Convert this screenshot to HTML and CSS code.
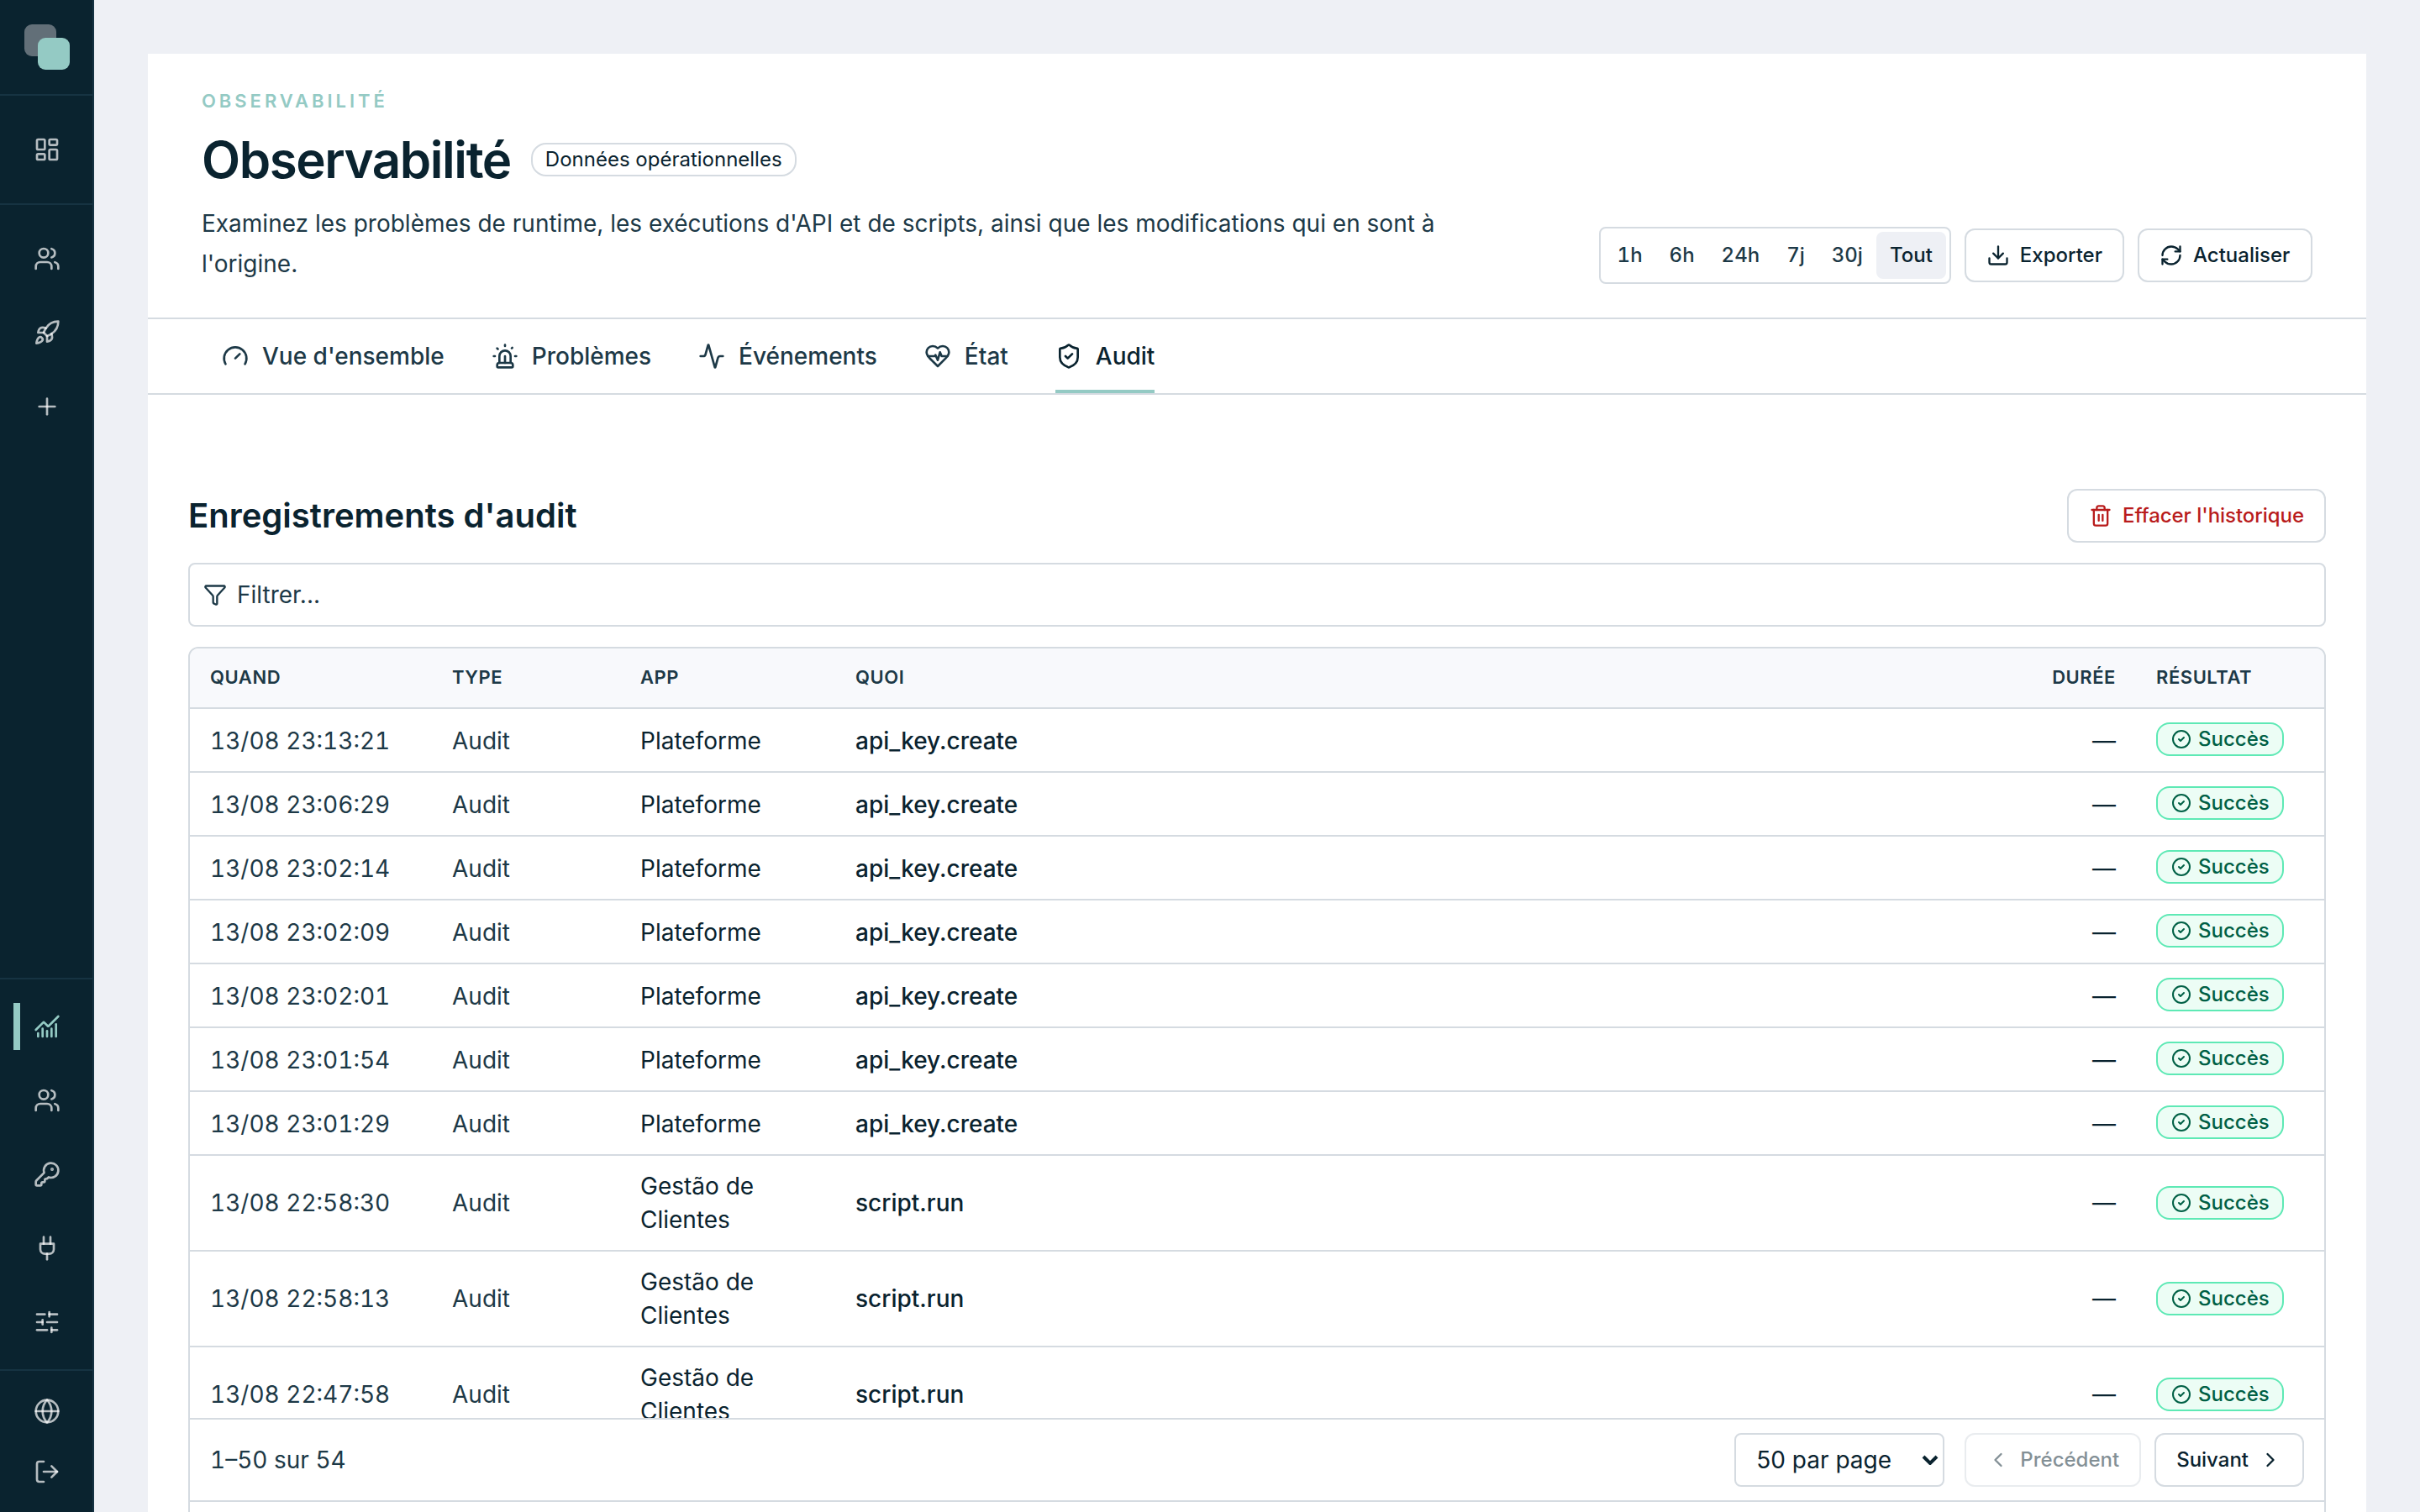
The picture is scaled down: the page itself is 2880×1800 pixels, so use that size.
FILE: index.html
```html
<!DOCTYPE html>
<html lang="fr">
<head>
    <meta charset="UTF-8">
    <meta name="viewport" content="width=device-width, initial-scale=1.0">
    <title>Observabilité</title>
    <link rel="stylesheet" href="styles.css">
</head>
<body>
    <!-- Icon sprite -->
    <svg class="sprite" aria-hidden="true">
        <symbol id="i-dashboard" viewBox="0 0 24 24"><rect width="7" height="9" x="3" y="3" rx="1"/><rect width="7" height="5" x="14" y="3" rx="1"/><rect width="7" height="9" x="14" y="12" rx="1"/><rect width="7" height="5" x="3" y="16" rx="1"/></symbol>
        <symbol id="i-users" viewBox="0 0 24 24"><path d="M16 21v-2a4 4 0 0 0-4-4H6a4 4 0 0 0-4 4v2"/><circle cx="9" cy="7" r="4"/><path d="M22 21v-2a4 4 0 0 0-3-3.87"/><path d="M16 3.13a4 4 0 0 1 0 7.75"/></symbol>
        <symbol id="i-rocket" viewBox="0 0 24 24"><path d="M4.5 16.5c-1.5 1.26-2 5-2 5s3.74-.5 5-2c.71-.84.7-2.13-.09-2.91a2.18 2.18 0 0 0-2.91-.09z"/><path d="m12 15-3-3a22 22 0 0 1 2-3.95A12.88 12.88 0 0 1 22 2c0 2.72-.78 7.5-6 11a22.35 22.35 0 0 1-4 2z"/><path d="M9 12H4s.55-3.03 2-4c1.62-1.08 5 0 5 0"/><path d="M12 15v5s3.03-.55 4-2c1.08-1.62 0-5 0-5"/></symbol>
        <symbol id="i-plus" viewBox="0 0 24 24"><path d="M5 12h14"/><path d="M12 5v14"/></symbol>
        <symbol id="i-chart" viewBox="0 0 24 24"><path d="M12 16v5"/><path d="M16 14v7"/><path d="M20 10v11"/><path d="m22 3-8.646 8.646a.5.5 0 0 1-.708 0L9.354 8.354a.5.5 0 0 0-.707 0L2 15"/><path d="M4 18v3"/><path d="M8 14v7"/></symbol>
        <symbol id="i-key" viewBox="0 0 24 24"><path d="M2.586 17.414A2 2 0 0 0 2 18.828V21a1 1 0 0 0 1 1h3a1 1 0 0 0 1-1v-1a1 1 0 0 1 1-1h1a1 1 0 0 0 1-1v-1a1 1 0 0 1 1-1h.172a2 2 0 0 0 1.414-.586l.814-.814a6.5 6.5 0 1 0-4-4z"/><circle cx="16.5" cy="7.5" r=".5" fill="currentColor"/></symbol>
        <symbol id="i-plug" viewBox="0 0 24 24"><path d="M12 22v-5"/><path d="M9 8V2"/><path d="M15 8V2"/><path d="M18 8v5a4 4 0 0 1-4 4h-4a4 4 0 0 1-4-4V8Z"/></symbol>
        <symbol id="i-sliders" viewBox="0 0 24 24"><path d="M10 5H3"/><path d="M12 19H3"/><path d="M14 3v4"/><path d="M16 17v4"/><path d="M21 12h-9"/><path d="M21 19h-5"/><path d="M21 5h-7"/><path d="M8 10v4"/><path d="M8 12H3"/></symbol>
        <symbol id="i-globe" viewBox="0 0 24 24"><circle cx="12" cy="12" r="10"/><path d="M12 2a14.5 14.5 0 0 0 0 20 14.5 14.5 0 0 0 0-20"/><path d="M2 12h20"/></symbol>
        <symbol id="i-logout" viewBox="0 0 24 24"><path d="m16 17 5-5-5-5"/><path d="M21 12H9"/><path d="M9 21H5a2 2 0 0 1-2-2V5a2 2 0 0 1 2-2h4"/></symbol>
        <symbol id="i-gauge" viewBox="0 0 24 24"><path d="m12 14 4-4"/><path d="M3.34 19a10 10 0 1 1 17.32 0"/></symbol>
        <symbol id="i-siren" viewBox="0 0 24 24"><path d="M7 18v-6a5 5 0 1 1 10 0v6"/><path d="M5 21a1 1 0 0 0 1 1h12a1 1 0 0 0 1-1v-1a2 2 0 0 0-2-2H7a2 2 0 0 0-2 2z"/><path d="M21 12h1"/><path d="M18.5 4.5 18 5"/><path d="M2 12h1"/><path d="M12 2v1"/><path d="m4.929 4.929.707.707"/><path d="M12 12v6"/></symbol>
        <symbol id="i-activity" viewBox="0 0 24 24"><path d="M22 12h-2.48a2 2 0 0 0-1.93 1.46l-2.35 8.36a.25.25 0 0 1-.48 0L9.24 2.18a.25.25 0 0 0-.48 0l-2.35 8.36A2 2 0 0 1 4.49 12H2"/></symbol>
        <symbol id="i-heart" viewBox="0 0 24 24"><path d="M19 14c1.49-1.46 3-3.21 3-5.5A5.5 5.5 0 0 0 16.5 3c-1.76 0-3 .5-4.5 2-1.5-1.5-2.74-2-4.5-2A5.5 5.5 0 0 0 2 8.5c0 2.3 1.5 4.05 3 5.5l7 7Z"/><path d="M3.22 12H9.5l.5-1 2 4.5 2-7 1.5 3.5h5.27"/></symbol>
        <symbol id="i-shield" viewBox="0 0 24 24"><path d="M20 13c0 5-3.5 7.5-7.66 8.95a1 1 0 0 1-.67-.01C7.5 20.5 4 18 4 13V6a1 1 0 0 1 1-1c2 0 4.5-1.2 6.24-2.72a1.17 1.17 0 0 1 1.52 0C14.51 3.81 17 5 19 5a1 1 0 0 1 1 1z"/><path d="m9 12 2 2 4-4"/></symbol>
        <symbol id="i-download" viewBox="0 0 24 24"><path d="M12 15V3"/><path d="M21 15v4a2 2 0 0 1-2 2H5a2 2 0 0 1-2-2v-4"/><path d="m7 10 5 5 5-5"/></symbol>
        <symbol id="i-refresh" viewBox="0 0 24 24"><path d="M3 12a9 9 0 0 1 9-9 9.75 9.75 0 0 1 6.74 2.74L21 8"/><path d="M21 3v5h-5"/><path d="M21 12a9 9 0 0 1-9 9 9.75 9.75 0 0 1-6.74-2.74L3 16"/><path d="M8 16H3v5"/></symbol>
        <symbol id="i-trash" viewBox="0 0 24 24"><path d="M10 11v6"/><path d="M14 11v6"/><path d="M19 6v14a2 2 0 0 1-2 2H7a2 2 0 0 1-2-2V6"/><path d="M3 6h18"/><path d="M8 6V4a2 2 0 0 1 2-2h4a2 2 0 0 1 2 2v2"/></symbol>
        <symbol id="i-funnel" viewBox="0 0 24 24"><path d="M10 20a1 1 0 0 0 .553.895l2 1A1 1 0 0 0 14 21v-7a2 2 0 0 1 .517-1.341L21.74 4.67A1 1 0 0 0 21 3H3a1 1 0 0 0-.742 1.67l7.225 7.989A2 2 0 0 1 10 14z"/></symbol>
        <symbol id="i-check" viewBox="0 0 24 24"><circle cx="12" cy="12" r="10"/><path d="m9 12 2 2 4-4"/></symbol>
        <symbol id="i-left" viewBox="0 0 24 24"><path d="m15 18-6-6 6-6"/></symbol>
        <symbol id="i-right" viewBox="0 0 24 24"><path d="m9 18 6-6-6-6"/></symbol>
    </svg>

    <aside class="sidebar">
        <a href="#" class="logo"><span class="logo-mark"></span></a>
        <nav class="nav nav-home">
            <a href="#" class="nav-item"><svg class="icon"><use href="#i-dashboard"/></svg></a>
        </nav>
        <nav class="nav nav-apps">
            <a href="#" class="nav-item"><svg class="icon"><use href="#i-users"/></svg></a>
            <a href="#" class="nav-item"><svg class="icon"><use href="#i-rocket"/></svg></a>
            <a href="#" class="nav-item"><svg class="icon"><use href="#i-plus"/></svg></a>
        </nav>
        <nav class="nav nav-admin">
            <a href="#" class="nav-item active"><svg class="icon"><use href="#i-chart"/></svg></a>
            <a href="#" class="nav-item"><svg class="icon"><use href="#i-users"/></svg></a>
            <a href="#" class="nav-item"><svg class="icon"><use href="#i-key"/></svg></a>
            <a href="#" class="nav-item"><svg class="icon"><use href="#i-plug"/></svg></a>
            <a href="#" class="nav-item"><svg class="icon"><use href="#i-sliders"/></svg></a>
        </nav>
        <nav class="nav nav-footer">
            <a href="#" class="nav-item"><svg class="icon"><use href="#i-globe"/></svg></a>
            <a href="#" class="nav-item"><svg class="icon"><use href="#i-logout"/></svg></a>
        </nav>
    </aside>

    <main class="main">
        <div class="panel">
            <header class="page-header">
                <div class="page-intro">
                    <div class="eyebrow">Observabilité</div>
                    <div class="title-row">
                        <h1>Observabilité</h1>
                        <span class="pill">Données opérationnelles</span>
                    </div>
                    <p class="description">Examinez les problèmes de runtime, les exécutions d'API et de scripts, ainsi que les modifications qui en sont à l'origine.</p>
                </div>
                <div class="actions">
                    <div class="range">
                        <button>1h</button>
                        <button>6h</button>
                        <button>24h</button>
                        <button>7j</button>
                        <button>30j</button>
                        <button class="selected">Tout</button>
                    </div>
                    <button class="btn"><svg class="icon"><use href="#i-download"/></svg>Exporter</button>
                    <button class="btn refresh"><svg class="icon"><use href="#i-refresh"/></svg>Actualiser</button>
                </div>
            </header>

            <nav class="tabs">
                <a href="#" class="tab"><svg class="icon"><use href="#i-gauge"/></svg>Vue d'ensemble</a>
                <a href="#" class="tab"><svg class="icon"><use href="#i-siren"/></svg>Problèmes</a>
                <a href="#" class="tab"><svg class="icon"><use href="#i-activity"/></svg>Événements</a>
                <a href="#" class="tab"><svg class="icon"><use href="#i-heart"/></svg>État</a>
                <a href="#" class="tab active"><svg class="icon"><use href="#i-shield"/></svg>Audit</a>
            </nav>

            <section class="content">
                <div class="section-header">
                    <h2>Enregistrements d'audit</h2>
                    <button class="btn danger"><svg class="icon"><use href="#i-trash"/></svg>Effacer l'historique</button>
                </div>

                <div class="filter"><svg class="icon"><use href="#i-funnel"/></svg><span>Filtrer...</span></div>

                <div class="table-card">
                    <div class="table-scroll">
                        <table>
                            <thead>
                                <tr>
                                    <th class="col-when">Quand</th>
                                    <th class="col-type">Type</th>
                                    <th class="col-app">App</th>
                                    <th>Quoi</th>
                                    <th class="col-duration">Durée</th>
                                    <th class="col-result">Résultat</th>
                                </tr>
                            </thead>
                            <tbody>
                                <tr>
                                    <td class="when">13/08 23:13:21</td>
                                    <td class="type">Audit</td>
                                    <td>Plateforme</td>
                                    <td class="what">api_key.create</td>
                                    <td class="duration">—</td>
                                    <td class="result"><span class="badge"><svg class="icon"><use href="#i-check"/></svg>Succès</span></td>
                                </tr>
                                <tr>
                                    <td class="when">13/08 23:06:29</td>
                                    <td class="type">Audit</td>
                                    <td>Plateforme</td>
                                    <td class="what">api_key.create</td>
                                    <td class="duration">—</td>
                                    <td class="result"><span class="badge"><svg class="icon"><use href="#i-check"/></svg>Succès</span></td>
                                </tr>
                                <tr>
                                    <td class="when">13/08 23:02:14</td>
                                    <td class="type">Audit</td>
                                    <td>Plateforme</td>
                                    <td class="what">api_key.create</td>
                                    <td class="duration">—</td>
                                    <td class="result"><span class="badge"><svg class="icon"><use href="#i-check"/></svg>Succès</span></td>
                                </tr>
                                <tr>
                                    <td class="when">13/08 23:02:09</td>
                                    <td class="type">Audit</td>
                                    <td>Plateforme</td>
                                    <td class="what">api_key.create</td>
                                    <td class="duration">—</td>
                                    <td class="result"><span class="badge"><svg class="icon"><use href="#i-check"/></svg>Succès</span></td>
                                </tr>
                                <tr>
                                    <td class="when">13/08 23:02:01</td>
                                    <td class="type">Audit</td>
                                    <td>Plateforme</td>
                                    <td class="what">api_key.create</td>
                                    <td class="duration">—</td>
                                    <td class="result"><span class="badge"><svg class="icon"><use href="#i-check"/></svg>Succès</span></td>
                                </tr>
                                <tr>
                                    <td class="when">13/08 23:01:54</td>
                                    <td class="type">Audit</td>
                                    <td>Plateforme</td>
                                    <td class="what">api_key.create</td>
                                    <td class="duration">—</td>
                                    <td class="result"><span class="badge"><svg class="icon"><use href="#i-check"/></svg>Succès</span></td>
                                </tr>
                                <tr>
                                    <td class="when">13/08 23:01:29</td>
                                    <td class="type">Audit</td>
                                    <td>Plateforme</td>
                                    <td class="what">api_key.create</td>
                                    <td class="duration">—</td>
                                    <td class="result"><span class="badge"><svg class="icon"><use href="#i-check"/></svg>Succès</span></td>
                                </tr>
                                <tr class="multi">
                                    <td class="when">13/08 22:58:30</td>
                                    <td class="type">Audit</td>
                                    <td>Gestão de Clientes</td>
                                    <td class="what">script.run</td>
                                    <td class="duration">—</td>
                                    <td class="result"><span class="badge"><svg class="icon"><use href="#i-check"/></svg>Succès</span></td>
                                </tr>
                                <tr class="multi">
                                    <td class="when">13/08 22:58:13</td>
                                    <td class="type">Audit</td>
                                    <td>Gestão de Clientes</td>
                                    <td class="what">script.run</td>
                                    <td class="duration">—</td>
                                    <td class="result"><span class="badge"><svg class="icon"><use href="#i-check"/></svg>Succès</span></td>
                                </tr>
                                <tr class="multi">
                                    <td class="when">13/08 22:47:58</td>
                                    <td class="type">Audit</td>
                                    <td>Gestão de Clientes</td>
                                    <td class="what">script.run</td>
                                    <td class="duration">—</td>
                                    <td class="result"><span class="badge"><svg class="icon"><use href="#i-check"/></svg>Succès</span></td>
                                </tr>
                            </tbody>
                        </table>
                    </div>
                    <div class="pagination">
                        <span class="count">1–50 sur 54</span>
                        <div class="page-size">
                            <select>
                                <option>50 par page</option>
                            </select>
                            <svg class="caret" viewBox="0 0 20 12"><path d="M2 2l8 8 8-8"/></svg>
                        </div>
                        <div class="pager">
                            <button class="btn" disabled><svg class="icon"><use href="#i-left"/></svg>Précédent</button>
                            <button class="btn">Suivant<svg class="icon"><use href="#i-right"/></svg></button>
                        </div>
                    </div>
                </div>
            </section>
        </div>
    </main>
</body>
</html>
```

FILE: styles.css
```css
:root {
    --navy: #0a232f;
    --navy-line: #163342;
    --ink: #0a232f;
    --ink-soft: #1d3947;
    --mint: #94cac4;
    --line: #d5dbe1;
    --bg: #eef0f5;
}
* {
    box-sizing: border-box;
}
body {
    margin: 0;
    height: 100vh;
    display: flex;
    overflow: hidden;
    background: var(--bg);
    color: var(--ink);
    font-family: Inter, sans-serif;
    font-size: 28px;
    line-height: 40px;
}
a {
    color: inherit;
    text-decoration: none;
}
h1, h2, p {
    margin: 0;
}
button, select {
    font-family: inherit;
    color: inherit;
    margin: 0;
}
.sprite {
    display: none;
}
.icon {
    width: 28px;
    height: 28px;
    flex: none;
    fill: none;
    stroke: currentColor;
    stroke-width: 2;
    stroke-linecap: round;
    stroke-linejoin: round;
}

/* Sidebar */
.sidebar {
    width: 112px;
    flex: none;
    display: flex;
    flex-direction: column;
    background: var(--navy);
    border-right: 2px solid var(--navy-line);
    color: rgba(255, 255, 255, 0.7);
}
.logo {
    height: 114px;
    padding: 29px 0 0 29px;
    border-bottom: 2px solid var(--navy-line);
}
.logo-mark {
    display: block;
    position: relative;
    width: 54px;
    height: 54px;
}
.logo-mark::before,
.logo-mark::after {
    content: "";
    position: absolute;
    width: 38px;
    height: 38px;
    border-radius: 9px;
}
.logo-mark::before {
    top: 0;
    left: 0;
    background: #626f78;
}
.logo-mark::after {
    right: 0;
    bottom: 0;
    background: var(--mint);
}
.nav {
    display: flex;
    flex-direction: column;
    gap: 8px;
    padding: 24px 0;
}
.nav-item {
    position: relative;
    height: 80px;
    padding-left: 2px;
    display: flex;
    align-items: center;
    justify-content: center;
}
.nav-item .icon {
    width: 32px;
    height: 32px;
}
.nav-item.active {
    color: var(--mint);
}
.nav-item.active::before {
    content: "";
    position: absolute;
    left: 16px;
    top: 12px;
    width: 8px;
    height: 56px;
    background: var(--mint);
}
.nav-home {
    border-bottom: 2px solid var(--navy-line);
}
.nav-admin {
    margin-top: auto;
    padding: 16px 0;
    border-top: 2px solid var(--navy-line);
}
.nav-footer {
    gap: 0;
    padding: 12px 0;
    border-top: 2px solid var(--navy-line);
}
.nav-footer .nav-item {
    height: 72px;
}

/* Page header */
.main {
    flex: 1;
    padding: 64px 64px 0;
    overflow: hidden;
}
.panel {
    background: #fff;
}
.page-header {
    display: flex;
    justify-content: space-between;
    align-items: flex-end;
    padding: 40px 64px;
    border-bottom: 2px solid var(--line);
}
.eyebrow {
    margin-bottom: 24px;
    color: var(--mint);
    font-size: 22px;
    font-weight: 600;
    line-height: 32px;
    letter-spacing: 0.18em;
    text-transform: uppercase;
}
.title-row {
    display: flex;
    align-items: center;
    gap: 24px;
    margin-bottom: 22px;
}
h1 {
    font-size: 60px;
    font-weight: 600;
    line-height: 60px;
    letter-spacing: -0.024em;
}
.pill {
    padding: 0 15px;
    border: 2px solid var(--line);
    border-radius: 18px;
    font-size: 24px;
    line-height: 36px;
}
.description {
    max-width: 1520px;
    color: var(--ink-soft);
    line-height: 48px;
}
.actions {
    display: flex;
    align-items: center;
    gap: 16px;
}
.range {
    display: flex;
    padding: 4px;
    border: 2px solid var(--line);
    border-radius: 8px;
}
.range button {
    height: 56px;
    padding: 0 16px 1px;
    border: 0;
    border-radius: 8px;
    background: none;
    color: var(--ink-soft);
    font-size: 24px;
    font-weight: 500;
    font-variant-numeric: tabular-nums;
}
.range .selected {
    background: var(--bg);
    color: var(--ink);
}
.btn {
    height: 64px;
    display: inline-flex;
    align-items: center;
    gap: 12px;
    padding: 0 24px 1px;
    border: 2px solid var(--line);
    border-radius: 12px;
    background: #fff;
    color: var(--ink);
    font-size: 24px;
    font-weight: 500;
}
.btn .icon {
    margin-top: 1px;
}
.btn.refresh {
    min-width: 208px;
}
.btn.danger {
    color: #b91c1c;
    letter-spacing: -0.002em;
}
.btn:disabled {
    opacity: 0.5;
}

/* Tabs */
.tabs {
    display: flex;
    gap: 56px;
    height: 90px;
    padding: 0 88px;
    border-bottom: 2px solid var(--line);
}
.tab {
    display: flex;
    align-items: center;
    gap: 16px;
    padding-top: 4px;
    border-bottom: 4px solid transparent;
    color: var(--ink-soft);
    font-weight: 500;
}
.tab .icon {
    width: 32px;
    height: 32px;
}
.tab.active {
    border-bottom-color: var(--mint);
    color: var(--ink);
}

/* Audit records */
.content {
    padding: 112px 48px 48px;
}
.section-header {
    display: flex;
    justify-content: space-between;
    align-items: center;
    margin-bottom: 24px;
}
h2 {
    font-size: 40px;
    font-weight: 600;
    line-height: 56px;
}
.filter {
    display: flex;
    align-items: center;
    gap: 12px;
    height: 76px;
    margin-bottom: 24px;
    padding: 0 16px;
    border: 2px solid var(--line);
    border-radius: 8px;
    color: var(--ink-soft);
}
.table-card {
    height: 1200px;
    border: 2px solid var(--line);
    border-radius: 12px;
    overflow: hidden;
}
.table-scroll {
    height: 916px;
    overflow: hidden;
}
table {
    width: 100%;
    table-layout: fixed;
    border-collapse: separate;
    border-spacing: 0;
}
th {
    height: 72px;
    padding: 0 24px 2px;
    background: #f8f9fc;
    border-bottom: 2px solid var(--line);
    color: var(--ink-soft);
    font-size: 22px;
    font-weight: 600;
    letter-spacing: 0.025em;
    text-align: left;
    text-transform: uppercase;
}
td {
    height: 76px;
    padding: 17px 24px 15px;
    border-bottom: 2px solid var(--line);
    vertical-align: middle;
}
td.result,
.multi td {
    padding: 16px 24px;
}
.multi td.result {
    padding: 17px 24px 15px;
}
.col-when { width: 288px; }
.col-type { width: 224px; }
.col-app { width: 256px; }
.col-duration { width: 200px; text-align: right; }
.col-result { width: 224px; }
.when {
    color: var(--ink-soft);
    font-variant-numeric: tabular-nums;
    white-space: nowrap;
}
.type {
    color: var(--ink-soft);
}
.what {
    font-weight: 500;
}
.duration {
    text-align: right;
}
.badge {
    display: flex;
    align-items: center;
    gap: 8px;
    width: 152px;
    height: 40px;
    margin-bottom: 2px;
    padding: 0 0 1px 16px;
    border: 2px solid #5ee9b5;
    border-radius: 16px;
    background: #ecfdf5;
    color: #006045;
    font-size: 24px;
    font-weight: 500;
}
.badge .icon {
    width: 24px;
    height: 24px;
    margin-top: 1px;
}
.pagination {
    display: flex;
    align-items: center;
    height: 100px;
    padding: 0 24px;
    border-top: 2px solid var(--line);
    border-bottom: 2px solid var(--line);
}
.count {
    margin-right: auto;
    color: var(--ink-soft);
    font-variant-numeric: tabular-nums;
}
.page-size {
    position: relative;
    margin-right: 24px;
}
.page-size select {
    display: block;
    width: 250px;
    height: 64px;
    padding: 0 24px;
    appearance: none;
    border: 2px solid var(--line);
    border-radius: 8px;
    background: #fff;
    font-size: 28px;
}
.caret {
    position: absolute;
    right: 7px;
    top: 26px;
    width: 20px;
    height: 12px;
    fill: none;
    stroke: currentColor;
    stroke-width: 4;
}
.pager {
    display: flex;
    gap: 16px;
}
```
